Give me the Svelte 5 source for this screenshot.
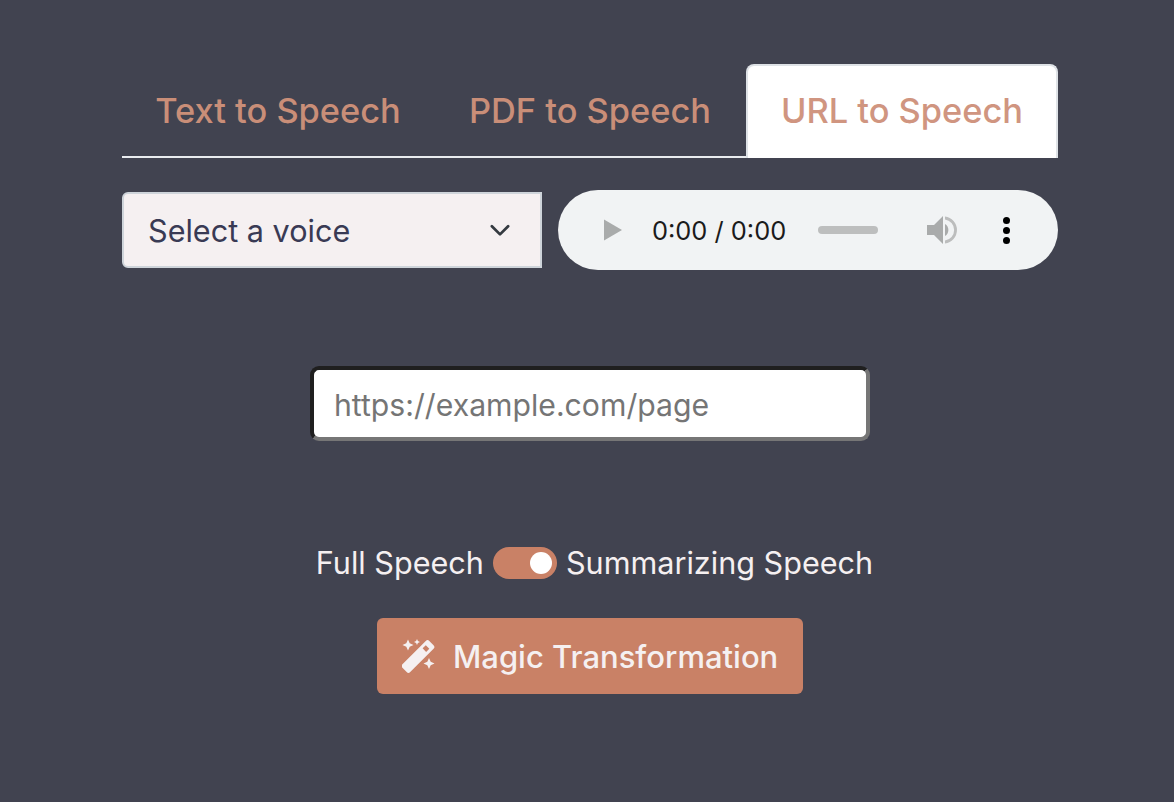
<script lang="ts">
    const tabs = ['Text to Speech', 'PDF to Speech', 'URL to Speech'];
    let active = $state(2);
    let summarize = $state(true);
</script>

<main class="page">
    <nav class="tabs">
        {#each tabs as tab, i}
            <button class="tab" class:active={active === i} onclick={() => (active = i)}>{tab}</button>
        {/each}
    </nav>

    <div class="controls">
        <div class="voice-select">
            <span>Select a voice</span>
            <svg viewBox="0 0 24 24" width="30" height="30" fill="none" stroke="#343a40" stroke-width="2.2" stroke-linecap="round" stroke-linejoin="round">
                <path d="M5.5 9l6.5 6.5L18.5 9" />
            </svg>
        </div>
        <div class="player">
            <svg class="play" viewBox="0 0 20 24" width="20" height="24"><path d="M1 1.5L19 12 1 22.5z" fill="#a9abab" /></svg>
            <span class="time">0:00 / 0:00</span>
            <div class="track"></div>
            <svg class="volume" viewBox="0 0 32 32" width="32" height="32">
                <path d="M1 11h7l9-9v28l-9-9H1z" fill="#a9abab" />
                <path d="M19 10a7 7 0 0 1 0 12z" fill="#a9abab" />
                <path d="M19 2.500a13.600 13.600 0 0 1 0 27v-3a10.600 10.600 0 0 0 0-21z" fill="#bcbdbd" />
            </svg>
            <div class="more"><i></i><i></i><i></i></div>
        </div>
    </div>

    <div class="url-row">
        <input class="url" type="text" placeholder="https://example.com/page" />
    </div>

    <div class="mode">
        <span>Full Speech</span>
        <button class="switch" class:on={summarize} aria-label="Toggle summary" onclick={() => (summarize = !summarize)}></button>
        <span>Summarizing Speech</span>
    </div>

    <div class="action">
        <button class="magic">
            <svg viewBox="0 0 34 34" width="34" height="34" fill="#f5f0f1">
                <!-- wand -->
                <g transform="rotate(-45 16 17.500)">
                    <rect x="-3" y="12" width="38" height="11" rx="2.500" />
                    <rect x="25" y="15" width="4.500" height="5" fill="#c98166" />
                </g>
                <!-- sparkles -->
                <path d="M6 .5l1.700 3.800L11.500 6 7.700 7.700 6 11.500 4.300 7.700.5 6l3.800-1.700z" />
                <path d="M15 0l.9 2.100L18 3l-2.100.9L15 6l-.9-2.100L12 3l2.100-.9z" />
                <path d="M27 19l1.700 3.800 3.800 1.700-3.800 1.700L27 30l-1.700-3.800-3.800-1.700 3.800-1.700z" />
            </svg>
            Magic Transformation
        </button>
    </div>
</main>

<style>
    :global(body) {
        background: #414350;
        font-family: Inter, "Noto Sans", sans-serif;
    }

    .page {
        width: 936px;
        margin-left: 122px;
        padding-top: 64px;
    }

    .tabs {
        display: grid;
        grid-template-columns: repeat(3, 1fr);
        border-bottom: 2px solid #e9ecef;
        height: 94px;
        box-sizing: border-box;
    }

    .tab {
        height: 94px;
        border: 2px solid transparent;
        border-bottom: none;
        border-radius: 8px 8px 0 0;
        background: none;
        color: #c98e78;
        font: 500 34.400px Inter, sans-serif;
        padding: 0 0 4px;
        cursor: pointer;
    }

    .tab.active {
        background: #fff;
        border-color: #dee2e6;
        color: #d09580;
    }

    .controls {
        display: flex;
        gap: 16px;
        align-items: center;
        margin-top: 32px;
    }

    .voice-select {
        width: 420px;
        height: 76px;
        box-sizing: border-box;
        display: flex;
        align-items: center;
        justify-content: space-between;
        padding: 0 25px 0 24px;
        background: #f5f0f1;
        border: 2px solid #ced4da;
        border-radius: 6px 0 0 6px;
        color: #393a54;
        font-size: 30.600px;
    }

    .player {
        width: 500px;
        height: 80px;
        box-sizing: border-box;
        display: flex;
        align-items: center;
        background: #f1f3f4;
        border-radius: 40px;
        padding-left: 45px;
    }

    .time {
        margin-left: 29px;
        font-size: 25.400px;
        color: #1b1b1b;
        white-space: nowrap;
    }

    .track {
        width: 60px;
        height: 8px;
        margin-left: 32px;
        border-radius: 4px;
        background: #bdbebe;
    }

    .volume {
        margin-left: 48px;
    }

    .more {
        display: flex;
        flex-direction: column;
        gap: 3px;
        margin-left: 45px;
    }

    .more i {
        width: 7px;
        height: 7px;
        border-radius: 50%;
        background: #000;
    }

    .url-row {
        display: flex;
        justify-content: center;
        margin-top: 96px;
    }

    .url {
        width: 560px;
        height: 75px;
        box-sizing: border-box;
        padding: 2px 20px 0;
        background: #fff;
        border-width: 4px;
        border-style: solid;
        border-color: #1f1f1f #767676 #767676 #1f1f1f;
        border-radius: 9px;
        font: 400 30.200px Inter, sans-serif;
        color: #333;
        outline: none;
    }

    .url::placeholder {
        color: #757575;
    }

    .mode {
        display: flex;
        justify-content: center;
        align-items: center;
        gap: 9px;
        margin-top: 103px;
        padding-left: 9px;
        color: #f5f0f1;
        font-size: 30.600px;
    }

    .switch {
        position: relative;
        width: 64px;
        height: 32px;
        padding: 0;
        border: none;
        border-radius: 16px;
        background: #c98166;
        cursor: pointer;
    }

    .switch::after {
        content: '';
        position: absolute;
        top: 5px;
        left: 5px;
        width: 22px;
        height: 22px;
        border-radius: 50%;
        background: #fff;
    }

    .switch.on::after {
        left: 37px;
    }

    .action {
        display: flex;
        justify-content: center;
        margin-top: 37px;
    }

    .magic {
        display: flex;
        align-items: center;
        gap: 17px;
        width: 426px;
        height: 76px;
        box-sizing: border-box;
        padding: 0 0 0 25px;
        border: none;
        border-radius: 6px;
        background: #c98166;
        color: #f5f0f1;
        font: 500 31px Inter, sans-serif;
        cursor: pointer;
    }
</style>
